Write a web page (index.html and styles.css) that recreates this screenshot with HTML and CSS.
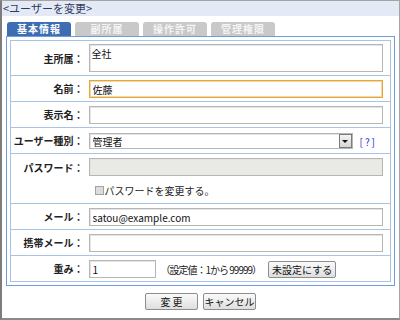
FILE: index.html
```html
<!DOCTYPE html>
<html lang="ja">
<head>
    <meta charset="UTF-8">
    <title>ユーザーを変更</title>
    <link rel="stylesheet" href="styles.css">
</head>
<body>
    <div class="window">
        <div class="title">&lt;ユーザーを変更&gt;</div>

        <div class="tabs">
            <span class="tab active">基本情報</span>
            <span class="tab">副所属</span>
            <span class="tab">操作許可</span>
            <span class="tab">管理権限</span>
        </div>

        <div class="panel">
            <table class="form">
                <tr class="row-group">
                    <th>主所属：</th>
                    <td><textarea class="field area">全社</textarea></td>
                </tr>
                <tr>
                    <th>名前：</th>
                    <td><input type="text" class="field focused" value="佐藤"></td>
                </tr>
                <tr>
                    <th>表示名：</th>
                    <td><input type="text" class="field"></td>
                </tr>
                <tr>
                    <th>ユーザー種別：</th>
                    <td>
                        <div class="inline">
                            <div class="select">
                                <select>
                                    <option>管理者</option>
                                </select>
                                <span class="arrow"><span class="tri"></span></span>
                            </div>
                            <a class="help" href="#">[?]</a>
                        </div>
                    </td>
                </tr>
                <tr class="row-pass">
                    <th>パスワード：</th>
                    <td>
                        <input type="password" class="field" disabled>
                        <label class="check"><input type="checkbox" disabled>パスワードを変更する。</label>
                    </td>
                </tr>
                <tr>
                    <th>メール：</th>
                    <td><input type="text" class="field" value="satou@example.com"></td>
                </tr>
                <tr>
                    <th>携帯メール：</th>
                    <td><input type="text" class="field"></td>
                </tr>
                <tr class="row-last">
                    <th>重み：</th>
                    <td>
                        <div class="inline">
                            <input type="text" class="field weight" value="1">
                            <span class="note">（設定値：1から 99999）</span>
                            <button type="button" class="btn">未設定にする</button>
                        </div>
                    </td>
                </tr>
            </table>
        </div>

        <div class="actions">
            <button type="button" class="btn wide">変 更</button>
            <button type="button" class="btn wide">キャンセル</button>
        </div>
    </div>
</body>
</html>
```

FILE: styles.css
```css
* {
    margin: 0;
    padding: 0;
    box-sizing: border-box;
    font-family: "Noto Sans CJK JP", sans-serif;
}

body {
    width: 400px;
    height: 320px;
    background: white;
}

.window {
    height: 320px;
    border: 1px solid #a4a4a4;
    border-left: 2px solid #7c7c7c;
    border-bottom: 2px solid #8a8a8a;
}

.title {
    height: 15px;
    line-height: 15px;
    background: #e4eaf5;
    color: #2e3a63;
    font-size: 11px;
    padding-left: 1px;
}

.tabs {
    display: flex;
    gap: 4px;
    margin: 6px 0 0 5px;
}

.tab {
    width: 64px;
    height: 14px;
    line-height: 14px;
    text-align: center;
    font-size: 10px;
    font-weight: 700;
    color: #f4f4f4;
    background: #c9c9c9;
    border-radius: 3px 3px 0 0;
    letter-spacing: 1px;
}

.tab.active {
    background: #3d6db3;
    color: white;
}

.panel {
    margin: 0 4px;
    border: 1px solid #6f9cd6;
    padding: 3px;
}

.form {
    width: 100%;
    border-collapse: collapse;
    border: 1px solid #a7c4e7;
}

.form tr {
    border-bottom: 1px solid #a7c4e7;
}

.form th {
    width: 75px;
    padding-right: 2px;
    text-align: right;
    font-size: 10px;
    font-weight: 700;
    color: #222;
    white-space: nowrap;
}

.form td {
    padding: 4px 7px 3px 3px;
    height: 26px;
}

.field {
    display: block;
    width: 100%;
    height: 18px;
    border: 1px solid #b6b6b6;
    box-shadow: inset 1px 1px 0 #e4e4e4;
    background: white;
    font-size: 10px;
    color: #111;
    padding: 0 3px;
    outline: none;
}

.field.area {
    height: 28px;
    resize: none;
    padding: 1px 2px;
    overflow: hidden;
}

.field.focused {
    border-color: #e2a744;
    box-shadow: inset 0 0 0 1px #f6d79c;
}

.field:disabled {
    background: #e9e9e5;
}

.row-group td {
    padding-top: 3px;
    height: 34px;
}

.inline {
    display: flex;
    align-items: center;
    gap: 7px;
}

.select {
    display: flex;
    width: 264px;
    height: 16px;
    border: 1px solid #b6b6b6;
    box-shadow: inset 1px 1px 0 #e4e4e4;
}

.select select {
    flex: 1;
    appearance: none;
    border: none;
    background: transparent;
    font-size: 10px;
    padding-left: 3px;
    color: #111;
    outline: none;
}

.arrow {
    width: 13px;
    display: flex;
    align-items: center;
    justify-content: center;
    background: linear-gradient(#f4f4f4, #d6d6d6);
    border: 1px solid #7a7a7a;
}

.tri {
    width: 0;
    height: 0;
    border-left: 3px solid transparent;
    border-right: 3px solid transparent;
    border-top: 3px solid #111;
}

.help {
    color: #2c2cd6;
    font-size: 10px;
    text-decoration: none;
    letter-spacing: 2px;
}

.row-pass th {
    vertical-align: top;
    padding-top: 6px;
}

.row-pass td {
    padding-bottom: 5px;
}

.check {
    display: flex;
    align-items: center;
    gap: 1px;
    margin: 7px 0 0 6px;
    font-size: 10px;
    color: #222;
}

.check input {
    appearance: none;
    width: 9px;
    height: 9px;
    border: 1px solid #a3a3a3;
    background: #dcdcdc;
}

.row-last {
    border-bottom: none;
}

.row-last td {
    height: 24px;
}

.field.weight {
    width: 67px;
    flex: none;
}

.note {
    font-size: 10px;
    color: #222;
    margin-left: -2px;
    letter-spacing: -1px;
    white-space: nowrap;
}

.btn {
    height: 17px;
    padding: 0 3px;
    font-size: 10px;
    color: #111;
    border: 1px solid #8d8d8d;
    border-radius: 2px;
    background: linear-gradient(#fbfbfb, #dedede);
    white-space: nowrap;
}

.actions {
    display: flex;
    justify-content: center;
    gap: 5px;
    margin-top: 7px;
}

.btn.wide {
    width: 53px;
    padding: 0;
}
```
